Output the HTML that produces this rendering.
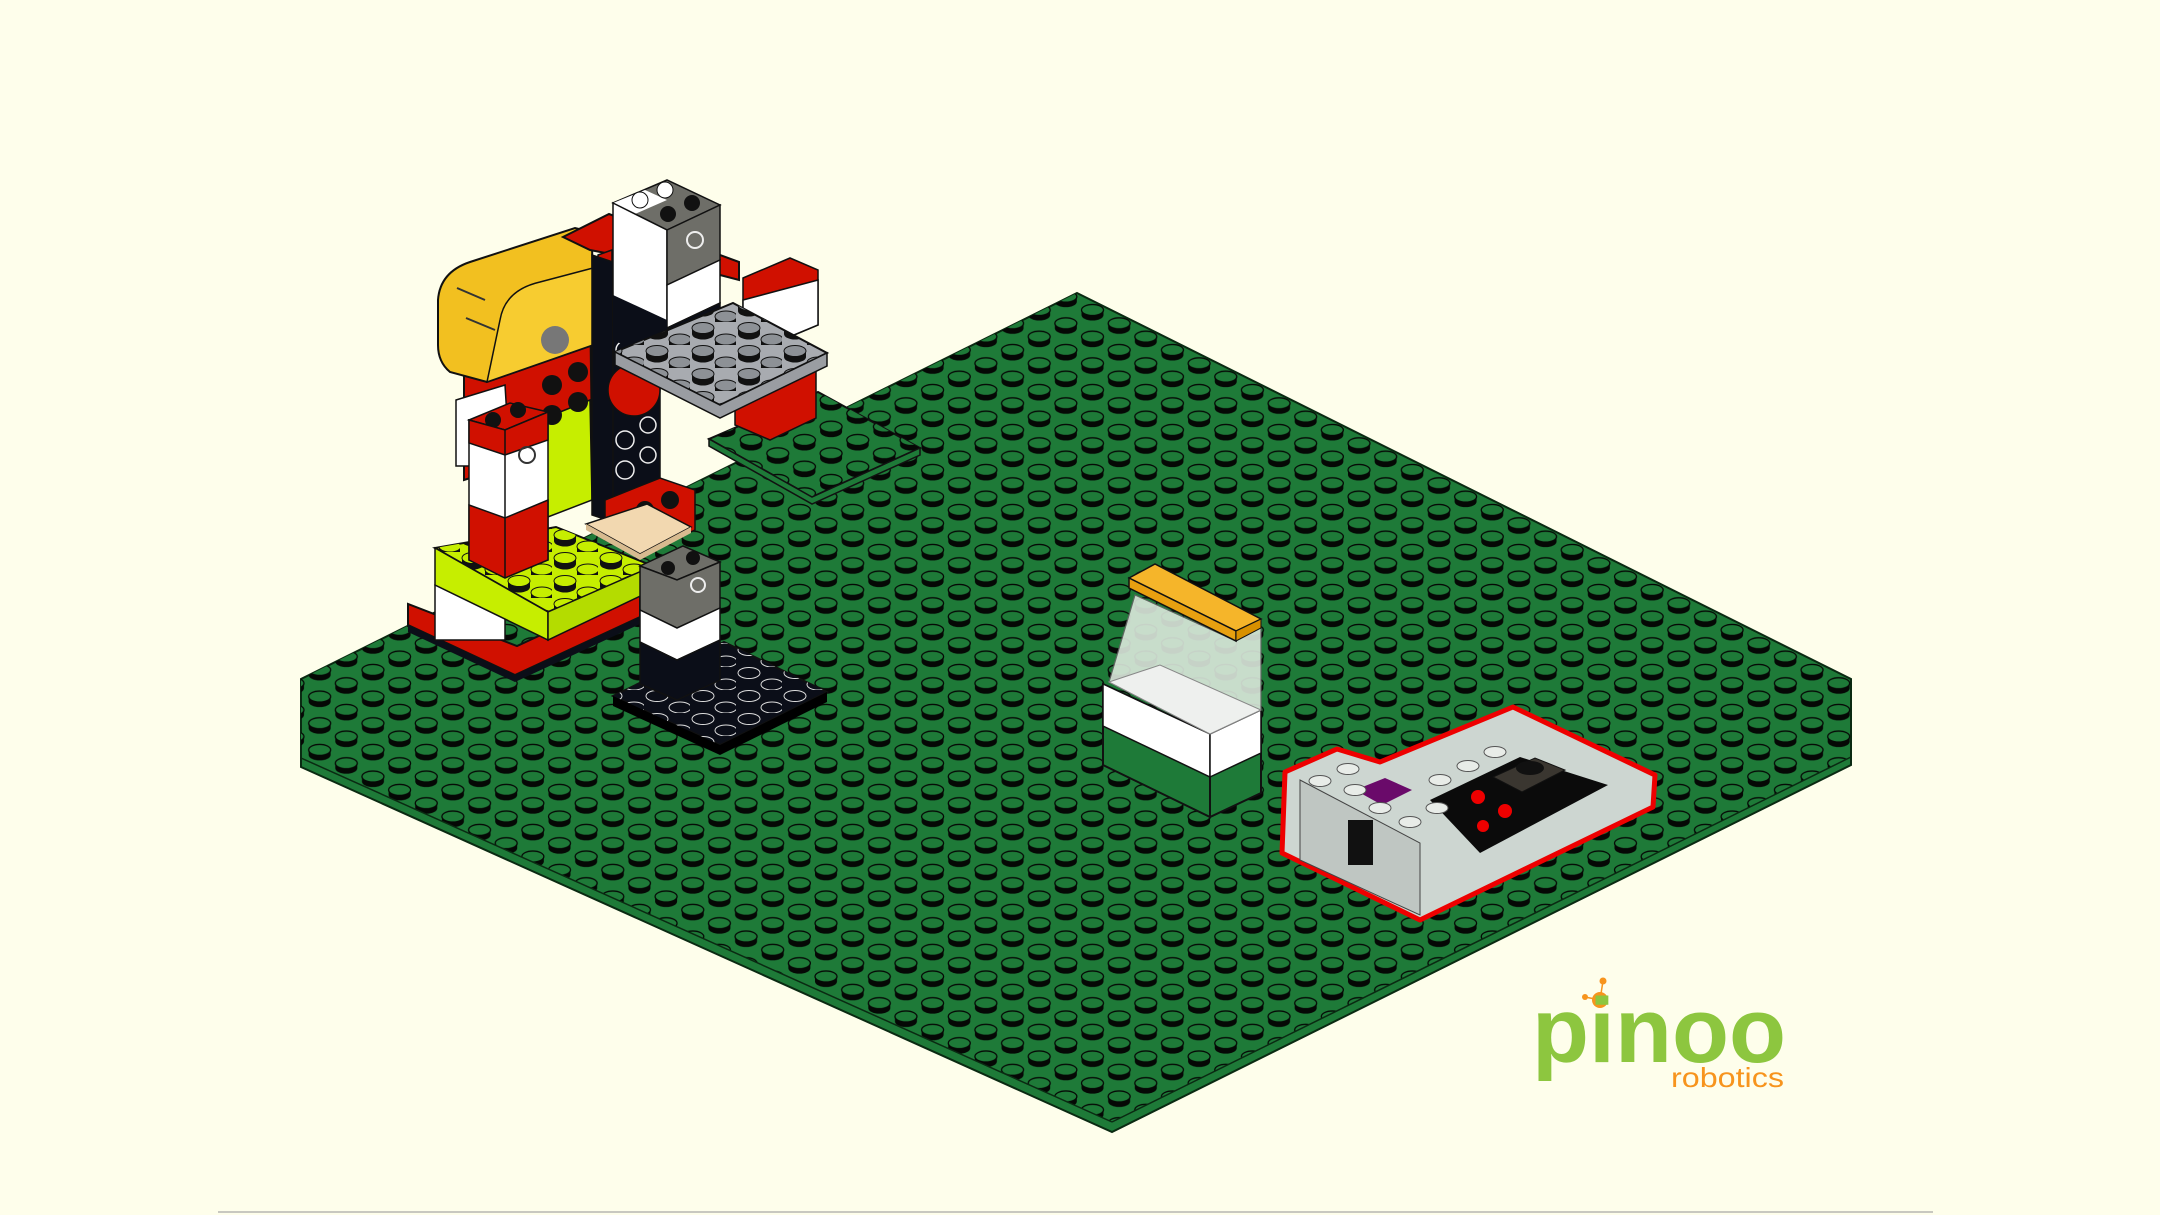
<!DOCTYPE html>
<html><head><meta charset="utf-8"><style>
html,body{margin:0;padding:0;background:#fefeeb;width:2160px;height:1215px;overflow:hidden}
svg{position:absolute;left:0;top:0}
</style></head><body>
<svg width="2160" height="1215" viewBox="0 0 2160 1215" xmlns="http://www.w3.org/2000/svg">
<defs>
<pattern id="studs" x="1077" y="310" width="53.3" height="26.66" patternUnits="userSpaceOnUse">
  <g id="s">
   <path d="M4.5,0 v5 a11,5.5 0 0 0 22,0 v-5 z" fill="#050805"/>
   <ellipse cx="15.5" cy="0" rx="11" ry="5.5" fill="#1e7a38" stroke="#050805" stroke-width="1.3"/>
  </g>
  <use href="#s" x="26.65" y="13.33"/>
  <use href="#s" x="0" y="26.66"/>
  <use href="#s" x="-26.65" y="13.33"/>
  <use href="#s" x="53.3" y="0"/>
  <use href="#s" x="53.3" y="26.66"/>
</pattern>
<pattern id="sgstuds" x="709" y="400" width="53.3" height="26.66" patternUnits="userSpaceOnUse">
  <use href="#s" x="0" y="0"/>
  <use href="#s" x="26.65" y="13.33"/>
  <use href="#s" x="0" y="26.66"/>
  <use href="#s" x="-26.65" y="13.33"/>
  <use href="#s" x="53.3" y="0"/>
  <use href="#s" x="53.3" y="26.66"/>
</pattern>
<pattern id="gstuds" x="0" y="0" width="46" height="23" patternUnits="userSpaceOnUse">
  <path d="M2,6 v6 a11,5.5 0 0 0 22,0 v-6 z" fill="#111"/>
  <ellipse cx="13" cy="6" rx="11" ry="5.5" fill="#8d9196" stroke="#111" stroke-width="1"/>
  <path d="M25,17.5 v6 a11,5.5 0 0 0 22,0 v-6 z" fill="#111"/>
  <ellipse cx="36" cy="17.5" rx="11" ry="5.5" fill="#8d9196" stroke="#111" stroke-width="1"/>
</pattern>
<pattern id="lstuds" x="0" y="0" width="46" height="23" patternUnits="userSpaceOnUse">
  <path d="M2,6 v6 a11,5.5 0 0 0 22,0 v-6 z" fill="#111"/>
  <ellipse cx="13" cy="6" rx="11" ry="5.5" fill="#c6ee00" stroke="#111" stroke-width="1"/>
  <path d="M25,17.5 v6 a11,5.5 0 0 0 22,0 v-6 z" fill="#111"/>
  <ellipse cx="36" cy="17.5" rx="11" ry="5.5" fill="#c6ee00" stroke="#111" stroke-width="1"/>
</pattern>
<pattern id="bstuds" x="0" y="0" width="46" height="23" patternUnits="userSpaceOnUse">
  <ellipse cx="13" cy="6" rx="11" ry="5.5" fill="#0b0e18" stroke="#ddd" stroke-width="1"/>
  <ellipse cx="36" cy="17.5" rx="11" ry="5.5" fill="#0b0e18" stroke="#ddd" stroke-width="1"/>
</pattern>
</defs>

<!-- baseplate -->
<polygon points="1077,293 1851,679 1851,765 1112,1132 301,767 301,679" fill="#1e7a38" stroke="#0a2a12" stroke-width="2"/>
<polygon points="1077,293 1851,679 1851,757 1112,1122 301,758 301,679" fill="url(#studs)"/>
<line x1="301" y1="758" x2="1112" y2="1122" stroke="#0a2a12" stroke-width="1.5"/>
<line x1="1112" y1="1122" x2="1851" y2="757" stroke="#0a2a12" stroke-width="1.5"/>

<!-- small green plate -->
<polygon points="709,439 812,497 920,448 818,392" fill="#1e7a38" stroke="#111" stroke-width="2"/>
<polygon points="709,439 812,497 920,448 818,392" fill="url(#sgstuds)"/>
<polygon points="709,439 709,446 812,504 920,455 920,448 812,497" fill="#1e7a38" stroke="#111" stroke-width="1.5"/>

<!-- red base plate -->
<polygon points="408,604 408,625 515,675 640,617 640,589 517,646" fill="#d01000" stroke="#111" stroke-width="2"/>
<polygon points="408,625 408,632 515,682 640,624 640,617 515,675" fill="#0b0e18"/>
<!-- white under lime -->
<rect x="435" y="585" width="70" height="55" fill="#fff" stroke="#111" stroke-width="1.5"/>
<!-- lime plate -->
<polygon points="435,548 548,612 653,566 556,527" fill="#c6ee00" stroke="#111" stroke-width="2"/>
<polygon points="435,548 548,612 653,566 556,527" fill="url(#lstuds)"/>
<polygon points="435,548 435,585 548,640 548,612" fill="#c6ee00" stroke="#111" stroke-width="1.5"/>
<polygon points="548,612 548,640 653,590 653,566" fill="#b4dc00" stroke="#111" stroke-width="1.5"/>

<!-- red brick behind motor -->
<polygon points="464,350 590,300 592,440 464,480" fill="#d01000" stroke="#111" stroke-width="2"/>
<polygon points="540,420 590,400 592,500 540,520" fill="#c6ee00" stroke="#111" stroke-width="1.5"/>
<circle cx="552" cy="385" r="10" fill="#111"/><circle cx="578" cy="372" r="10" fill="#111"/>
<circle cx="552" cy="415" r="10" fill="#111"/><circle cx="578" cy="402" r="10" fill="#111"/>
<!-- yellow motor -->
<path d="M438,300 Q440,272 470,262 L575,228 L592,232 L593,345 L487,382 L450,372 Q438,362 438,345 Z" fill="#f2c020" stroke="#111" stroke-width="2"/>
<path d="M500,320 Q505,290 540,282 L593,268 L593,345 L487,382 Z" fill="#f7cc30" stroke="#111" stroke-width="1.5"/>
<circle cx="555" cy="340" r="14" fill="#777"/>
<line x1="457" y1="288" x2="485" y2="300" stroke="#333" stroke-width="2"/>
<line x1="466" y1="318" x2="495" y2="330" stroke="#333" stroke-width="2"/>
<!-- white block left -->
<polygon points="456,400 505,385 510,466 456,466" fill="#fff" stroke="#111" stroke-width="1.5"/>
<!-- red/white column -->
<polygon points="469,420 510,403 548,412 505,430" fill="#d01000" stroke="#111" stroke-width="1.5"/>
<circle cx="493" cy="420" r="8" fill="#111"/><circle cx="518" cy="410" r="8" fill="#111"/>
<polygon points="469,420 505,430 548,412 548,560 505,575 469,560" fill="#fff" stroke="#111" stroke-width="1.5"/>
<polygon points="469,420 505,430 548,412 548,440 505,455 469,443" fill="#d01000" stroke="#111" stroke-width="1.5"/>
<polygon points="469,505 505,518 548,500 548,560 505,578 469,560" fill="#d01000" stroke="#111" stroke-width="1.5"/>
<line x1="505" y1="430" x2="505" y2="578" stroke="#111" stroke-width="1.5"/>
<circle cx="527" cy="455" r="8" fill="none" stroke="#333" stroke-width="2"/>

<!-- red top beam -->
<polygon points="563,237 609,214 739,262 739,280 720,275 590,250" fill="#d01000" stroke="#111" stroke-width="2"/>
<polygon points="598,255 612,250 612,330 598,335" fill="#d01000" stroke="#111" stroke-width="1.5"/>
<!-- black vertical beam -->
<polygon points="592,255 613,262 613,522 592,515" fill="#0b0e18" stroke="#111" stroke-width="1.5"/>
<polygon points="613,262 660,250 660,490 613,522" fill="#0b0e18" stroke="#111" stroke-width="1.5"/>
<g fill="none" stroke="#eee" stroke-width="1.5">
<circle cx="625" cy="350" r="9"/><circle cx="625" cy="380" r="9"/><circle cx="625" cy="440" r="9"/><circle cx="625" cy="470" r="9"/><circle cx="648" cy="455" r="8"/><circle cx="648" cy="425" r="8"/></g>
<!-- red round -->
<ellipse cx="634" cy="390" rx="26" ry="26" fill="#d01000" stroke="#111" stroke-width="1.5"/>
<!-- red lower brick -->
<polygon points="605,500 660,478 695,490 695,530 640,555 605,540" fill="#d01000" stroke="#111" stroke-width="1.5"/>
<circle cx="645" cy="510" r="9" fill="#111"/><circle cx="670" cy="500" r="9" fill="#111"/>
<!-- tan tile -->
<polygon points="586,524 640,554 691,527 647,504" fill="#f2d8b0" stroke="#111" stroke-width="1.5"/>
<polygon points="586,524 586,530 640,560 691,533 691,527 640,554" fill="#d8bb90"/>

<!-- right red bricks -->
<polygon points="743,278 790,258 818,270 818,325 770,345 743,332" fill="#d01000" stroke="#111" stroke-width="1.5"/>
<polygon points="743,300 818,280 818,325 770,345 743,332" fill="#fff" stroke="#111" stroke-width="1.5"/>
<polygon points="735,374 816,360 816,418 770,440 735,425" fill="#d01000" stroke="#111" stroke-width="1.5"/>
<!-- top gray block -->
<polygon points="613,203 667,180 720,205 667,230" fill="#6e6e68" stroke="#111" stroke-width="1.5"/>
<polygon points="613,203 645,190 667,200 635,214" fill="#fff"/>
<circle cx="640" cy="200" r="8" fill="#fff" stroke="#111"/><circle cx="665" cy="190" r="8" fill="#fff" stroke="#111"/>
<circle cx="668" cy="214" r="8" fill="#111"/><circle cx="692" cy="203" r="8" fill="#111"/>
<polygon points="613,203 667,230 667,350 613,325" fill="#fff" stroke="#111" stroke-width="1.5"/>
<polygon points="667,230 720,205 720,260 667,285" fill="#6e6e68" stroke="#111" stroke-width="1.5"/>
<polygon points="667,285 720,260 720,303 667,328" fill="#fff" stroke="#111" stroke-width="1.5"/>
<polygon points="667,328 720,303 720,345 667,365" fill="#0b0e18" stroke="#111" stroke-width="1.5"/>
<polygon points="613,295 667,320 667,365 613,340" fill="#0b0e18"/>
<circle cx="695" cy="240" r="8" fill="none" stroke="#eee" stroke-width="2"/>
<!-- gray plate -->
<polygon points="615,352 720,405 827,353 733,303" fill="#a8abb0" stroke="#111" stroke-width="2"/>
<polygon points="615,352 720,405 827,353 733,303" fill="url(#gstuds)"/>
<polygon points="615,352 615,365 720,418 827,366 827,353 720,405" fill="#9a9da2" stroke="#111" stroke-width="1.5"/>

<!-- bottom black plate -->
<polygon points="613,696 720,745 827,692 724,642" fill="#0b0e18" stroke="#111" stroke-width="2"/>
<polygon points="613,696 720,745 827,692 724,642" fill="url(#bstuds)"/>
<polygon points="613,696 613,706 720,755 827,702 827,692 720,745" fill="#000"/>
<!-- bottom gray/white/black block -->
<polygon points="640,566 683,546 720,562 677,580" fill="#6e6e68" stroke="#111" stroke-width="1.5"/>
<circle cx="668" cy="568" r="7" fill="#111"/><circle cx="693" cy="558" r="7" fill="#111"/>
<polygon points="640,566 677,580 720,562 720,608 677,628 640,610" fill="#6e6e68" stroke="#111" stroke-width="1.5"/>
<polygon points="640,610 677,628 720,608 720,640 677,660 640,642" fill="#fff" stroke="#111" stroke-width="1.5"/>
<polygon points="640,642 677,660 720,640 720,680 677,700 640,684" fill="#0b0e18" stroke="#111" stroke-width="1.5"/>
<circle cx="698" cy="585" r="7" fill="none" stroke="#eee" stroke-width="2"/>

<!-- right: display block -->
<polygon points="1103,684 1210,734 1210,817 1103,765" fill="#1e7a38" stroke="#111" stroke-width="2"/>
<polygon points="1210,734 1261,710 1261,793 1210,817" fill="#1e7a38" stroke="#111" stroke-width="2"/>
<polygon points="1103,684 1210,734 1210,777 1103,726" fill="#fff" stroke="#111" stroke-width="1.5"/>
<polygon points="1210,734 1261,710 1261,753 1210,777" fill="#fff" stroke="#111" stroke-width="1.5"/>
<polygon points="1109,682 1135,595 1236,641 1261,619 1261,710 1210,734" fill="#dbe8dc" stroke="#666" stroke-width="1.2" opacity="0.9"/>
<polygon points="1109,682 1210,734 1261,710 1160,665" fill="#eef0ee" stroke="#888" stroke-width="1"/>
<polygon points="1129,578 1155,564 1261,619 1236,631" fill="#f5b52a" stroke="#111" stroke-width="1.5"/>
<polygon points="1129,578 1236,631 1236,641 1129,588" fill="#e8a010" stroke="#111" stroke-width="1.5"/>
<polygon points="1236,631 1261,619 1261,628 1236,641" fill="#d89000" stroke="#111" stroke-width="1"/>

<!-- pinoo box -->
<polygon points="1282,853 1285,772 1337,749 1380,762 1513,707 1655,775 1653,807 1420,920" fill="#cdd6d1" stroke="#ee0000" stroke-width="5" stroke-linejoin="round"/>
<polygon points="1430,800 1520,757 1608,785 1480,853" fill="#0b0b0b"/>
<polygon points="1493,777 1535,758 1565,770 1522,792" fill="#3a3630" stroke="#111"/>
<ellipse cx="1530" cy="768" rx="14" ry="7" fill="#111"/>
<circle cx="1478" cy="797" r="7" fill="#ee0000"/><circle cx="1505" cy="811" r="7" fill="#ee0000"/><circle cx="1483" cy="826" r="6" fill="#ee0000"/>
<polygon points="1355,790 1385,778 1412,790 1382,805" fill="#6a0a6a"/>
<polygon points="1300,780 1420,843 1420,915 1300,860" fill="#bfc6c2" stroke="#444" stroke-width="1"/>
<rect x="1348" y="820" width="25" height="45" fill="#111"/>
<g fill="#e8ece8" stroke="#555" stroke-width="1">
<ellipse cx="1320" cy="781" rx="11" ry="5.5"/><ellipse cx="1348" cy="769" rx="11" ry="5.5"/><ellipse cx="1355" cy="790" rx="11" ry="5.5"/>
<ellipse cx="1380" cy="808" rx="11" ry="5.5"/><ellipse cx="1410" cy="822" rx="11" ry="5.5"/><ellipse cx="1437" cy="808" rx="11" ry="5.5"/>
<ellipse cx="1440" cy="780" rx="11" ry="5.5"/><ellipse cx="1468" cy="766" rx="11" ry="5.5"/><ellipse cx="1495" cy="752" rx="11" ry="5.5"/></g>

<!-- logo -->
<circle cx="1600" cy="1000" r="8" fill="#f7941d"/>
<circle cx="1603" cy="981" r="3.5" fill="#f7941d"/>
<circle cx="1585" cy="997" r="3" fill="#f7941d"/>
<line x1="1600" y1="1000" x2="1603" y2="981" stroke="#f7941d" stroke-width="1.5"/>
<line x1="1600" y1="1000" x2="1585" y2="997" stroke="#f7941d" stroke-width="1.5"/>
<text x="1532" y="1062" font-family="Liberation Sans, sans-serif" font-weight="bold" font-size="92" fill="#8dc63f" textLength="254" lengthAdjust="spacingAndGlyphs">pinoo</text>
<text x="1671" y="1087" font-family="Liberation Sans, sans-serif" font-size="28" fill="#f7941d" textLength="113" lengthAdjust="spacingAndGlyphs">robotics</text>

<line x1="218" y1="1212" x2="1933" y2="1212" stroke="#c8c8c0" stroke-width="2"/>
</svg>
</body></html>
